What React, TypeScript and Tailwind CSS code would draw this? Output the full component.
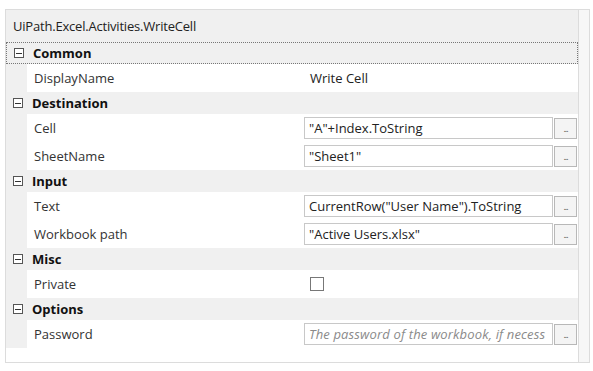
import React from 'react';

type Prop = {
  name: string;
  value?: string;
  kind: 'text' | 'input' | 'check' | 'placeholder';
};

type Section = {
  title: string;
  props: Prop[];
};

const sections: Section[] = [
  { title: 'Common', props: [{ name: 'DisplayName', value: 'Write Cell', kind: 'text' }] },
  {
    title: 'Destination',
    props: [
      { name: 'Cell', value: '"A"+Index.ToString', kind: 'input' },
      { name: 'SheetName', value: '"Sheet1"', kind: 'input' },
    ],
  },
  {
    title: 'Input',
    props: [
      { name: 'Text', value: 'CurrentRow("User Name").ToString', kind: 'input' },
      { name: 'Workbook path', value: '"Active Users.xlsx"', kind: 'input' },
    ],
  },
  { title: 'Misc', props: [{ name: 'Private', kind: 'check' }] },
  {
    title: 'Options',
    // the field is too narrow for the whole hint, so only this much shows
    props: [{ name: 'Password', value: 'The password of the workbook, if necess', kind: 'placeholder' }],
  },
];

const Expander = () => (
  <span className="w-[10px] h-[10px] border border-[#555] flex items-center justify-center bg-white shrink-0">
    <span className="w-[6px] h-px bg-[#333]" />
  </span>
);

const EllipsisButton = () => (
  <div className="w-[23px] h-[21px] ml-px border border-[#b8b8b8] bg-[#f4f4f4] flex items-end justify-center pb-[5px] shrink-0">
    <span className="text-[9px] leading-none text-[#555] tracking-[-1px]">...</span>
  </div>
);

const ValueCell: React.FC<{ prop: Prop }> = ({ prop }) => {
  if (prop.kind === 'text') {
    return <span className="pl-[6px] text-[#222]">{prop.value}</span>;
  }
  if (prop.kind === 'check') {
    return <span className="ml-[6px] w-[14px] h-[14px] border border-[#777] bg-white" />;
  }
  return (
    <div className="flex items-center">
      <div className="w-[249px] h-[22px] border border-[#c8c8c8] bg-white flex items-center px-[4px]">
        {prop.kind === 'placeholder' ? (
          <span className="whitespace-nowrap italic text-[#8a8a8a] tracking-[0.15px]">{prop.value}</span>
        ) : (
          <span className="text-[#222] whitespace-nowrap">{prop.value}</span>
        )}
      </div>
      <EllipsisButton />
    </div>
  );
};

export default function App() {
  return (
    <div
      className="w-[593px] h-[371px] bg-white pt-[9px] pl-[5px] text-[13px] leading-none"
      style={{ fontFamily: '"Segoe UI", "Open Sans", "Noto Sans", sans-serif' }}
    >
      <div className="w-[585px] h-[354px] border border-[#dcdcdc] flex">
        <div className="w-[572px] flex flex-col">
          <div className="h-[32px] bg-[#f0f0f0] flex items-center pl-[7px] text-[#222] tracking-[-0.2px]">
            UiPath.Excel.Activities.WriteCell
          </div>
          {sections.map((s, si) => (
            <React.Fragment key={s.title}>
              <div
                className={
                  'h-[22px] bg-[#f0f0f0] flex items-center gap-[9px] pl-[7px] font-bold text-[#111] ' +
                  (si === 0 ? 'border border-dotted border-[#777]' : '')
                }
              >
                <Expander />
                <span>{s.title}</span>
              </div>
              {s.props.map(p => (
                <div key={p.name} className="h-[28px] flex bg-[#f0f0f0]">
                  <div className="w-[21px] shrink-0" />
                  <div className="flex-1 bg-white flex items-center">
                    <div className="w-[277px] pl-[7px] text-[#333] shrink-0">{p.name}</div>
                    <ValueCell prop={p} />
                  </div>
                </div>
              ))}
            </React.Fragment>
          ))}
          <div className="flex-1 bg-white" />
        </div>
        <div className="flex-1 border-l border-[#dcdcdc] bg-[#f7f7f7]" />
      </div>
    </div>
  );
}
